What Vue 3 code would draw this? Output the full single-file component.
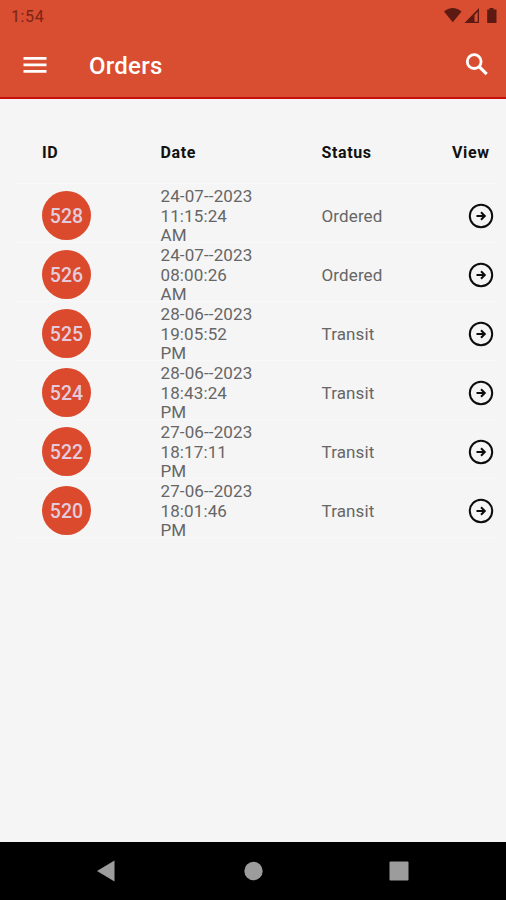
<script setup>
import {ref} from "vue";

const orders = ref([
    {id: 528, date: '24-07--2023', time: '11:15:24', half: 'AM', status: 'Ordered'},
    {id: 526, date: '24-07--2023', time: '08:00:26', half: 'AM', status: 'Ordered'},
    {id: 525, date: '28-06--2023', time: '19:05:52', half: 'PM', status: 'Transit'},
    {id: 524, date: '28-06--2023', time: '18:43:24', half: 'PM', status: 'Transit'},
    {id: 522, date: '27-06--2023', time: '18:17:11', half: 'PM', status: 'Transit'},
    {id: 520, date: '27-06--2023', time: '18:01:46', half: 'PM', status: 'Transit'},
]);
</script>

<template>
    <div class="screen">
        <header class="top">
            <div class="status-bar">
                <span class="clock">1:54</span>
                <svg class="signals" width="54" height="18" viewBox="0 0 54 18" fill="#5c1a12">
                    <path d="M0 4.600C5-.2 12.500-.2 17.500 4.600L8.800 15.200z"/>
                    <path fill-rule="evenodd" d="M35 1v15H20.500zM33.700 4.800L30.500 8v6.800h3.200z"/>
                    <path d="M45.500 1h4v1.600H52.500V16H43.200V2.600h2.300z"/>
                </svg>
            </div>
            <div class="app-bar">
                <svg class="menu" width="24" height="18" viewBox="0 0 24 18" fill="#fff">
                    <path d="M.5 1h23v2.800H.5zM.5 7.500h23v2.800H.5zM.5 14h23v2.800H.5z"/>
                </svg>
                <h1>Orders</h1>
                <svg class="search" width="24" height="24" viewBox="0 0 24 24" fill="none" stroke="#fff" stroke-width="2.800">
                    <circle cx="9.200" cy="8.600" r="6.900"/>
                    <path d="M13.900 13.300l7.800 7.800" stroke-width="3.200"/>
                </svg>
            </div>
        </header>

        <main>
            <div class="row head">
                <span>ID</span>
                <span>Date</span>
                <span>Status</span>
                <span>View</span>
            </div>
            <div class="row" v-for="order in orders" :key="order.id">
                <span class="badge">{{ order.id }}</span>
                <span class="date">{{ order.date }}<br>{{ order.time }}<br>{{ order.half }}</span>
                <span class="status">{{ order.status }}</span>
                <svg class="arrow" width="26" height="26" viewBox="0 0 26 26" fill="none" stroke="#0c0c0c" stroke-width="2">
                    <circle cx="13" cy="13" r="11.200"/>
                    <path d="M8.500 13h8M13 9.200l3.800 3.800-3.800 3.800"/>
                </svg>
            </div>
        </main>

        <nav>
            <svg width="506" height="58" viewBox="0 0 506 58" fill="#9c9c9c">
                <path d="M97 29l17.500-10.500v21z"/>
                <circle cx="253.500" cy="29" r="9.200"/>
                <rect x="389.500" y="19.500" width="19" height="19" rx="1"/>
            </svg>
        </nav>
    </div>
</template>

<style scoped>
.screen {
    display: flex;
    flex-direction: column;
    width: 506px;
    height: 900px;
    background: #f5f5f5;
    font-family: Roboto, "Liberation Sans", sans-serif;
    overflow: hidden;
}

.top {
    box-sizing: border-box;
    height: 99px;
    background: #d94d30;
    border-bottom: 2px solid #c90d0b;
}

.status-bar {
    display: flex;
    align-items: center;
    justify-content: space-between;
    height: 32px;
    padding: 0 8px 0 11px;
}

.clock {
    color: #7b2418;
    font-size: 16px;
    letter-spacing: 0.6px;
}

.signals {
    margin-top: -1px;
}

.app-bar {
    display: flex;
    align-items: center;
    height: 66px;
    padding: 0 17px 0 23px;
}

h1 {
    flex: 1;
    margin: 1px 0 0 42px;
    color: #fff;
    font-size: 24px;
    font-weight: 500;
    letter-spacing: 0.25px;
}

main {
    flex: 1;
    padding: 19px 10px 0 15px;
}

.row {
    display: grid;
    grid-template-columns: 118.5px 161px 130.5px 1fr;
    align-items: center;
    box-sizing: border-box;
    height: 59px;
    padding: 2px 0 0 27px;
    border-bottom: 1px solid #f8f8f8;
    color: #666;
    font-size: 17px;
    letter-spacing: 0.12px;
}

.row.head {
    height: 66px;
    padding-top: 3px;
    color: #111;
    font-size: 16px;
    font-weight: 700;
    letter-spacing: 0.6px;
}

.badge {
    width: 49px;
    height: 49px;
    border-radius: 50%;
    background: #db4a2c;
    color: #e3cbdc;
    font-size: 19.5px;
    font-weight: 500;
    line-height: 51px;
    text-align: center;
}

.date {
    padding-top: 1px;
    line-height: 19.6px;
}

.status {
    padding-top: 1px;
}

.arrow {
    justify-self: end;
    margin: 1px 2px 0 0;
}

nav {
    height: 58px;
    background: #000;
}

nav svg {
    display: block;
}
</style>

<style>
body {
    margin: 0;
}
</style>
